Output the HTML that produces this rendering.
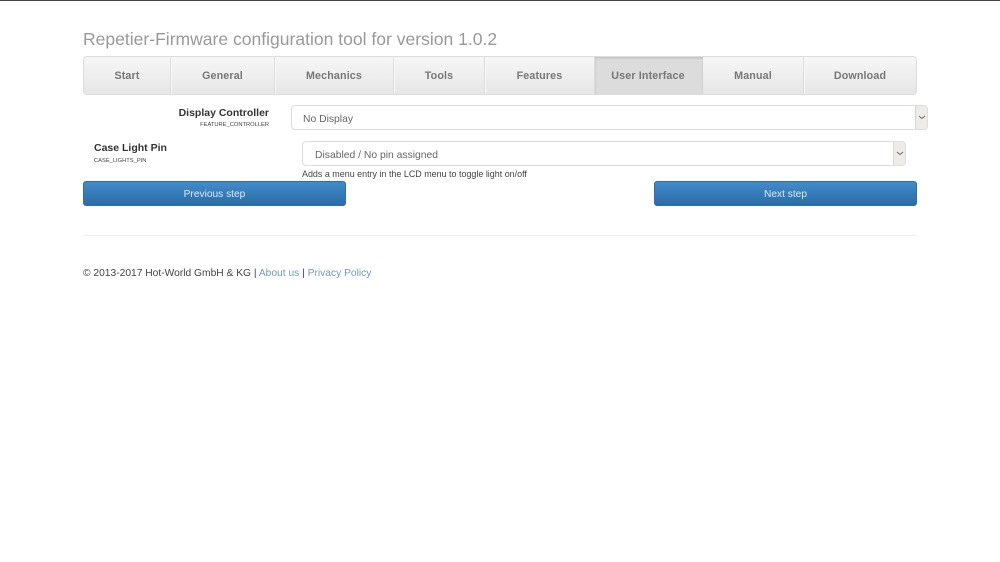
<!DOCTYPE html>
<html>
<head>
<meta charset="utf-8">
<style>
html,body{margin:0;padding:0;background:#fff;}
body{width:1000px;height:562px;overflow:hidden;position:relative;font-family:"Liberation Sans",sans-serif;color:#333;}
#wrap{position:absolute;left:0;top:0;width:1000px;height:562px;filter:blur(0.3px);}
.a{position:absolute;white-space:nowrap;}
#top{left:0;top:0;width:1000px;height:1px;background:#444;}
h1{margin:0;left:83px;top:29px;font-size:17.55px;line-height:20px;font-weight:400;color:#999;}
#nav{left:83px;top:56px;width:832px;height:37px;border:1px solid #ddd;border-radius:4px;background:linear-gradient(#f6f6f6,#e6e6e6);overflow:hidden;}
.t{position:absolute;top:0;height:37px;line-height:39px;text-align:center;font-size:10.7px;font-weight:700;color:#777;border-right:1px solid #dcdcdc;box-shadow:1px 0 0 #f8f8f8;box-sizing:border-box;letter-spacing:.15px;}
.on{background:#dcdcdc;box-shadow:inset 0 1px 2px #bbb;border-right:0;padding-right:2px;}
.lb{font-size:10.5px;font-weight:700;color:#333;line-height:13px;}
.sm{font-size:5.75px;color:#444;line-height:8px;}
.sel{box-sizing:border-box;height:25px;border:1px solid #ddd;border-radius:4px;background:#fff;font-size:10.35px;line-height:27px;color:#666;padding-left:12px;}
.ar{position:absolute;right:0;top:0;width:11px;height:23px;background:#eeebe8;border-left:1px solid #d9d5d0;border-radius:0 3px 3px 0;}
.ar svg{position:absolute;left:2px;top:9px;}
.btn{box-sizing:border-box;height:25px;width:263px;border-radius:3px;background:linear-gradient(#428bca,#2a6ca6);border:1px solid #2f6fa8;color:#dfeaf4;font-size:10.2px;line-height:25px;text-align:center;}
#hr{left:83px;top:235px;width:834px;height:1px;background:#f0f0f0;}
#foot{left:83px;top:267px;font-size:10.25px;line-height:14px;color:#444;}
#foot span{color:#6b9ac4;}
</style>
</head>
<body>
<div id="wrap">
<div class="a" id="top"></div>
<h1 class="a">Repetier-Firmware configuration tool for version 1.0.2</h1>
<div class="a" id="nav">
<div class="t" style="left:0;width:87px">Start</div>
<div class="t" style="left:87px;width:104px">General</div>
<div class="t" style="left:191px;width:119px">Mechanics</div>
<div class="t" style="left:310px;width:91px">Tools</div>
<div class="t" style="left:401px;width:110px">Features</div>
<div class="t on" style="left:511px;width:108px">User Interface</div>
<div class="t" style="left:619px;width:101px">Manual</div>
<div class="t" style="left:720px;width:112px;border-right:0;box-shadow:none">Download</div>
</div>
<div class="a lb" style="right:731px;top:107px">Display Controller</div>
<div class="a sm" style="right:731px;top:121px">FEATURE_CONTROLLER</div>
<div class="a sel" style="left:291px;top:105px;width:637px;padding-left:11px">No Display<div class="ar"><svg width="8" height="5" viewBox="0 0 8 5"><path d="M1 1L4 3.5 7 1" fill="none" stroke="#666" stroke-width=".9"/></svg></div></div>
<div class="a lb" style="left:94px;top:142px">Case Light Pin</div>
<div class="a sm" style="left:94px;top:157px">CASE_LIGHTS_PIN</div>
<div class="a sel" style="left:302px;top:141px;width:604px">Disabled / No pin assigned<div class="ar"><svg width="8" height="5" viewBox="0 0 8 5"><path d="M1 1L4 3.5 7 1" fill="none" stroke="#666" stroke-width=".9"/></svg></div></div>
<div class="a" style="left:302px;top:168px;font-size:8.95px;line-height:12px;color:#444">Adds a menu entry in the LCD menu to toggle light on/off</div>
<div class="a btn" style="left:83px;top:181px">Previous step</div>
<div class="a btn" style="left:654px;top:181px">Next step</div>
<div class="a" id="hr"></div>
<div class="a" id="foot">© 2013-2017 Hot-World GmbH &amp; KG | <span>About us</span> | <span>Privacy Policy</span></div>
</div>
</body>
</html>
